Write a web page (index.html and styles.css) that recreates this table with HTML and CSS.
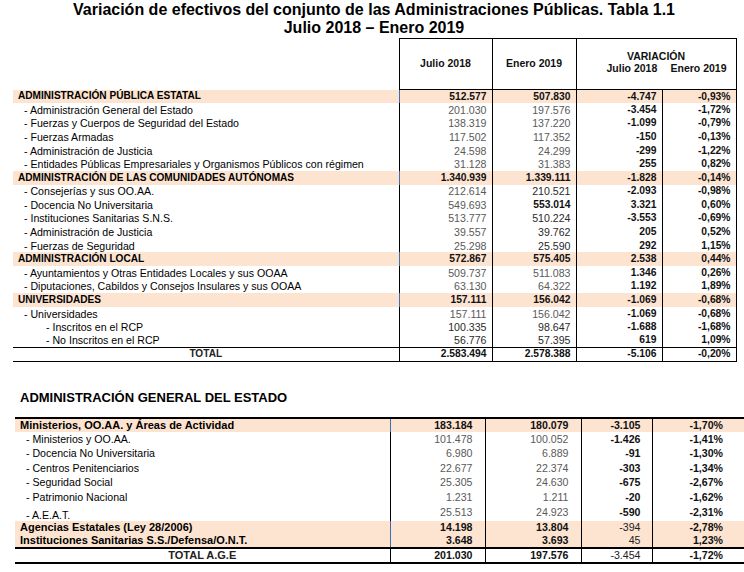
FILE: index.html
```html
<!DOCTYPE html>
<html lang="es">
<head>
<meta charset="utf-8">
<title>Variación de efectivos</title>
<link rel="stylesheet" href="styles.css">
</head>
<body>
<h1 class="title">Variación de efectivos del conjunto de las Administraciones Públicas. Tabla 1.1<br>Julio 2018 – Enero 2019</h1>

<table class="t1">
  <colgroup>
    <col class="c-label"><col class="c-a"><col class="c-b"><col class="c-c"><col class="c-d">
  </colgroup>
  <thead>
    <tr>
      <th class="blank"></th>
      <th class="hd">Julio 2018</th>
      <th class="hd">Enero 2019</th>
      <th class="hd hd-var" colspan="2">
        <div class="var-title">VARIACIÓN</div>
        <div class="var-sub"><span>Julio 2018</span><span>Enero 2019</span></div>
      </th>
    </tr>
  </thead>
  <tbody>
    <tr class="band"><td class="lab b">ADMINISTRACIÓN PÚBLICA ESTATAL</td><td class="n b">512.577</td><td class="n b">507.830</td><td class="n b">-4.747</td><td class="n b">-0,93%</td></tr>
    <tr><td class="lab s1">- Administración General del Estado</td><td class="n g">201.030</td><td class="n g">197.576</td><td class="n b">-3.454</td><td class="n b">-1,72%</td></tr>
    <tr><td class="lab s1">- Fuerzas y Cuerpos de Seguridad del Estado</td><td class="n g">138.319</td><td class="n g">137.220</td><td class="n b">-1.099</td><td class="n b">-0,79%</td></tr>
    <tr><td class="lab s1">- Fuerzas Armadas</td><td class="n g">117.502</td><td class="n g">117.352</td><td class="n b">-150</td><td class="n b">-0,13%</td></tr>
    <tr><td class="lab s1">- Administración de Justicia</td><td class="n g">24.598</td><td class="n g">24.299</td><td class="n b">-299</td><td class="n b">-1,22%</td></tr>
    <tr><td class="lab s1">- Entidades Públicas Empresariales y Organismos Públicos con régimen</td><td class="n g">31.128</td><td class="n g">31.383</td><td class="n b">255</td><td class="n b">0,82%</td></tr>
    <tr class="band"><td class="lab b">ADMINISTRACIÓN DE LAS COMUNIDADES AUTÓNOMAS</td><td class="n b">1.340.939</td><td class="n b">1.339.111</td><td class="n b">-1.828</td><td class="n b">-0,14%</td></tr>
    <tr><td class="lab s1">- Consejerías y sus OO.AA.</td><td class="n g">212.614</td><td class="n dk">210.521</td><td class="n b">-2.093</td><td class="n b">-0,98%</td></tr>
    <tr><td class="lab s1">- Docencia No Universitaria</td><td class="n g">549.693</td><td class="n b">553.014</td><td class="n b">3.321</td><td class="n b">0,60%</td></tr>
    <tr><td class="lab s1">- Instituciones Sanitarias S.N.S.</td><td class="n g">513.777</td><td class="n dk">510.224</td><td class="n b">-3.553</td><td class="n b">-0,69%</td></tr>
    <tr><td class="lab s1">- Administración de Justicia</td><td class="n g">39.557</td><td class="n dk">39.762</td><td class="n b">205</td><td class="n b">0,52%</td></tr>
    <tr><td class="lab s1">- Fuerzas de Seguridad</td><td class="n g">25.298</td><td class="n dk">25.590</td><td class="n b">292</td><td class="n b">1,15%</td></tr>
    <tr class="band"><td class="lab b">ADMINISTRACIÓN LOCAL</td><td class="n b">572.867</td><td class="n b">575.405</td><td class="n b">2.538</td><td class="n b">0,44%</td></tr>
    <tr><td class="lab s1">- Ayuntamientos y Otras Entidades Locales y sus OOAA</td><td class="n g">509.737</td><td class="n g">511.083</td><td class="n b">1.346</td><td class="n b">0,26%</td></tr>
    <tr><td class="lab s1">- Diputaciones, Cabildos y Consejos Insulares y sus OOAA</td><td class="n g">63.130</td><td class="n g">64.322</td><td class="n b">1.192</td><td class="n b">1,89%</td></tr>
    <tr class="band"><td class="lab b">UNIVERSIDADES</td><td class="n b">157.111</td><td class="n b">156.042</td><td class="n b">-1.069</td><td class="n b">-0,68%</td></tr>
    <tr><td class="lab s1">- Universidades</td><td class="n g">157.111</td><td class="n g">156.042</td><td class="n b">-1.069</td><td class="n b">-0,68%</td></tr>
    <tr><td class="lab s2">- Inscritos en el RCP</td><td class="n dk">100.335</td><td class="n dk">98.647</td><td class="n b">-1.688</td><td class="n b">-1,68%</td></tr>
    <tr><td class="lab s2">- No Inscritos en el RCP</td><td class="n dk">56.776</td><td class="n dk">57.395</td><td class="n b">619</td><td class="n b">1,09%</td></tr>
    <tr class="total"><td class="lab tot">TOTAL</td><td class="n b">2.583.494</td><td class="n b">2.578.388</td><td class="n b">-5.106</td><td class="n b">-0,20%</td></tr>
  </tbody>
</table>

<h2 class="section">ADMINISTRACIÓN GENERAL DEL ESTADO</h2>

<table class="t2">
  <colgroup>
    <col class="k-label"><col class="k-a"><col class="k-b"><col class="k-c"><col class="k-d">
  </colgroup>
  <tbody>
    <tr class="band first r14"><td class="lab b">Ministerios, OO.AA. y Áreas de Actividad</td><td class="n b">183.184</td><td class="n b">180.079</td><td class="n b">-3.105</td><td class="n b">-1,70%</td></tr>
    <tr class="r14"><td class="lab s1">- Ministerios y OO.AA.</td><td class="n g">101.478</td><td class="n g">100.052</td><td class="n b">-1.426</td><td class="n b">-1,41%</td></tr>
    <tr class="r15"><td class="lab s1">- Docencia No Universitaria</td><td class="n g">6.980</td><td class="n g">6.889</td><td class="n b">-91</td><td class="n b">-1,30%</td></tr>
    <tr class="r14"><td class="lab s1">- Centros Penitenciarios</td><td class="n g">22.677</td><td class="n g">22.374</td><td class="n b">-303</td><td class="n b">-1,34%</td></tr>
    <tr class="r15"><td class="lab s1">- Seguridad Social</td><td class="n g">25.305</td><td class="n g">24.630</td><td class="n b">-675</td><td class="n b">-2,67%</td></tr>
    <tr class="r14"><td class="lab s1">- Patrimonio Nacional</td><td class="n g">1.231</td><td class="n g">1.211</td><td class="n b">-20</td><td class="n b">-1,62%</td></tr>
    <tr class="r17"><td class="lab s1 low">- A.E.A.T.</td><td class="n g">25.513</td><td class="n g">24.923</td><td class="n b">-590</td><td class="n b">-2,31%</td></tr>
    <tr class="band r13"><td class="lab b">Agencias Estatales (Ley 28/2006)</td><td class="n b">14.198</td><td class="n b">13.804</td><td class="n m">-394</td><td class="n b">-2,78%</td></tr>
    <tr class="band r14"><td class="lab b">Instituciones Sanitarias S.S./Defensa/O.N.T.</td><td class="n b">3.648</td><td class="n b">3.693</td><td class="n m">45</td><td class="n b">1,23%</td></tr>
    <tr class="total r15"><td class="lab tot">TOTAL A.G.E</td><td class="n b">201.030</td><td class="n b">197.576</td><td class="n m">-3.454</td><td class="n b">-1,72%</td></tr>
  </tbody>
</table>
</body>
</html>
```

FILE: styles.css
```css
html, body {
  margin: 0;
  padding: 0;
  background: #fff;
}
body {
  font-family: "Liberation Sans", Arial, sans-serif;
  color: #000;
  width: 744px;
  height: 572px;
  overflow: hidden;
}

.title {
  margin: 0;
  padding: 1px 0 0 4px;
  font-size: 16px;
  line-height: 18px;
  font-weight: bold;
  text-align: center;
  color: #000;
}

table {
  border-collapse: collapse;
  table-layout: fixed;
}

/* ---------- Table 1 ---------- */
.t1 {
  margin: 1px 0 0 13px;
  width: 723px;
}
.c-label { width: 386px; }
.c-a { width: 93px; }
.c-b { width: 84px; }
.c-c { width: 86px; }
.c-d { width: 74px; }

.t1 thead tr { height: 51px; }
.t1 th.blank { border: none; }
.t1 th.hd {
  border: 1px solid #000;
  font-size: 10.5px;
  font-weight: bold;
  text-align: center;
  vertical-align: middle;
  padding: 0 0 2px;
  color: #111;
}
.t1 th.hd-var { padding: 0 0 4px; }
.var-title {
  line-height: 12px;
}
.var-sub {
  display: flex;
  justify-content: space-between;
  padding: 0 9px 0 30px;
  line-height: 12px;
}

.t1 tbody tr { height: 13.58px; }
.t1 tbody tr.total { height: 14px; }

td {
  padding: 0;
  white-space: nowrap;
  line-height: 12px;
  vertical-align: middle;
}
td.lab {
  font-size: 10.6px;
  color: #000;
}
td.lab.b {
  font-weight: bold;
  font-size: 10.1px;
  padding-left: 5px;
}
td.lab.s1 { padding-left: 11px; }
td.lab.s2 { padding-left: 33px; }
td.lab.tot {
  text-align: center;
  font-weight: bold;
  font-size: 10.1px;
  color: #222;
}

td.n {
  text-align: right;
  padding-right: 5px;
  font-size: 10.6px;
  border-left: 1px solid #000;
}
td.n.b { font-weight: bold; font-size: 10.3px; color: #111; }
td.n.g { color: #5a5a5a; }
td.n.dk { color: #2a2a2a; }
td.n.m { color: #222; font-size: 10.3px; }

tr.band td { background: #fde4d1; }
tr.band td:nth-child(2) { border-left-color: #3d6fb0; }

.t1 tr.total td {
  border-top: 1px solid #000;
  border-bottom: 1px solid #000;
}
.t1 td:last-child { border-right: 1px solid #000; }

/* ---------- Section title ---------- */
.section {
  margin: 28px 0 0 20px;
  font-size: 13px;
  line-height: 16px;
  font-weight: bold;
  color: #000;
}

/* ---------- Table 2 ---------- */
.t2 {
  margin: 11px 0 0 15px;
  width: 729px;
}
.k-label { width: 375px; }
.k-a { width: 95px; }
.k-b { width: 96px; }
.k-c { width: 71px; }
.k-d { width: 92px; }

.t2 tr.first td { border-top: 2px solid #000; }
.t2 td.lab { font-size: 10.6px; }
.t2 td.lab.b { font-size: 11px; padding-left: 5px; }
.t2 td.lab.s1 { padding-left: 11px; }
.t2 td.lab.tot { font-size: 11px; }
.t2 td.n { padding-right: 12px; }
.t2 td.n.b, .t2 td.n.m { font-size: 10.6px; }
.t2 td:nth-child(4) { padding-right: 11px; }
.t2 td:nth-child(5) { padding-right: 21px; }
.t2 td.low { vertical-align: bottom; }

.t2 tr.r13 { height: 13px; }
.t2 tr.r14 { height: 14px; }
.t2 tr.r15 { height: 15px; }
.t2 tr.r17 { height: 17px; }
.t2 tr.total td {
  border-top: 2px solid #000;
  border-bottom: 2px solid #000;
}
```
